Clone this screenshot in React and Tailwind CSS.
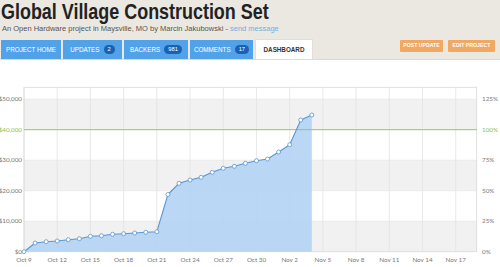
import React from "react";

const ys = [251.7, 243, 241.7, 241, 239.7, 238.7, 236.3, 235.7, 234.3, 233.7, 233, 232.3, 231.7, 194.5, 183.3, 180, 177.3, 172.3, 168.3, 166.3, 163.3, 160.7, 159, 152, 144.7, 120, 115];
const DX = 11.07;
const X0 = 24;
const pts = ys.map((y, i) => [X0 + i * DX, y]);
const BOT = 251.7;
const TOP = 87.3;
const RIGHT = 476.7;
const step = 30.5;
const xLabels = ["Oct 9", "Oct 12", "Oct 15", "Oct 18", "Oct 21", "Oct 24", "Oct 27", "Oct 30", "Nov 2", "Nov 5", "Nov 8", "Nov 11", "Nov 14", "Nov 17"];
const yLabels = ["$0", "$10,000", "$20,000", "$30,000", "$40,000", "$50,000"];
const pLabels = ["0%", "25%", "50%", "75%", "100%", "125%"];

function Chart() {
  const line = pts.map((p) => p.join(",")).join(" ");
  const area = `${X0},${BOT} ${line} ${pts[pts.length - 1][0]},${BOT}`;
  return (
    <svg width="500" height="207" viewBox="0 60 500 207" className="block">
      <rect x={X0} y={TOP} width={RIGHT - X0} height={BOT - TOP} fill="#ffffff" />
      {[1, 3, 5].map((k) => (
        <rect key={k} x={X0} y={BOT - k * step} width={RIGHT - X0} height={step} fill="#f1f1f1" />
      ))}
      {xLabels.map((_, i) => (
        <line key={i} x1={X0 + i * 3 * DX} x2={X0 + i * 3 * DX} y1={TOP} y2={BOT} stroke="#e2e2e2" strokeWidth="0.8" />
      ))}
      {[1, 2, 3, 5].map((k) => (
        <line key={k} x1={X0} x2={RIGHT} y1={BOT - k * step} y2={BOT - k * step} stroke="#e4e4e4" strokeWidth="0.6" />
      ))}
      <rect x={X0} y={TOP} width={RIGHT - X0} height={BOT - TOP} fill="none" stroke="#d9d9d9" strokeWidth="0.8" />
      <polygon points={area} fill="#b3d3f5" fillOpacity="0.9" />
      <line x1={X0} x2={RIGHT} y1={BOT - 4 * step} y2={BOT - 4 * step} stroke="#94c85a" strokeWidth="1" />
      <polyline points={line} fill="none" stroke="#5a97d0" strokeWidth="1.1" strokeLinejoin="round" />
      {pts.map(([x, y], i) => (
        <circle key={i} cx={x} cy={y} r="2" fill="#ffffff" stroke="#5a97d0" strokeWidth="0.8" />
      ))}
      <g fontFamily="Lato, 'Liberation Sans', sans-serif" fontSize="6.3" fill="#777">
        {yLabels.map((t, k) => (
          <text key={t} x="22" y={BOT - k * step + 2.2} textAnchor="end" fill={k === 4 ? "#8cbf4f" : "#777"}>{t}</text>
        ))}
        {pLabels.map((t, k) => (
          <text key={t} x="482" y={BOT - k * step + 2.2} fill={k === 4 ? "#8cbf4f" : "#777"}>{t}</text>
        ))}
        {xLabels.map((t, i) => (
          <text key={t} x={X0 + i * 3 * DX} y="261.8" textAnchor="middle">{t}</text>
        ))}
      </g>
    </svg>
  );
}

function Tab({ label, badge, w, active }) {
  return (
    <div
      className={`${w} flex items-center justify-center gap-[4px] text-[6.3px] ${active ? "h-[20px] bg-white text-[#333] font-bold border border-b-0 border-[#e2ded6]" : "h-[19px] bg-[#52a2ea] text-white"}`}
    >
      <span>{label}</span>
      {badge && (
        <span className="bg-[#1a61b4] rounded-full px-[4px] h-[9px] leading-[9px] text-[5.8px] text-white">{badge}</span>
      )}
    </div>
  );
}

export default function App() {
  return (
    <div className="w-[500px] h-[267px] bg-white overflow-hidden font-['Liberation_Sans',Arial,sans-serif]">
      <div className="bg-[#ebe8e1] pl-[1px] pr-[5px] pt-[1px] border-b border-[#dedad2]">
        <h1 className="text-[22px] leading-[21px] font-bold text-[#222] whitespace-nowrap origin-left scale-x-[0.815]">
          Global Village Construction Set
        </h1>
        <p className="text-[7.5px] leading-[9px] text-[#555] mt-[2px] pl-[1px]">
          An Open Hardware project in Maysville, MO by Marcin Jakubowski - <span className="text-[#74aee0]">send message</span>
        </p>
        <div className="flex justify-between items-start mt-[7px]">
          <div className="flex gap-[2px] items-end h-[19px]">
            <Tab label="PROJECT HOME" w="w-[60px]" />
            <Tab label="UPDATES" badge="2" w="w-[59px]" />
            <Tab label="BACKERS" badge="981" w="w-[64px]" />
            <Tab label="COMMENTS" badge="17" w="w-[63px]" />
            <Tab label="DASHBOARD" w="w-[58px]" active />
          </div>
          <div className="flex gap-[5px]">
            <div className="w-[43px] h-[12px] bg-[#f1a863] text-white text-[5.2px] font-bold flex items-center justify-center rounded-[1px]">POST UPDATE</div>
            <div className="w-[47px] h-[12px] bg-[#f1a863] text-white text-[5.2px] font-bold flex items-center justify-center rounded-[1px]">EDIT PROJECT</div>
          </div>
        </div>
      </div>
      <Chart />
    </div>
  );
}
